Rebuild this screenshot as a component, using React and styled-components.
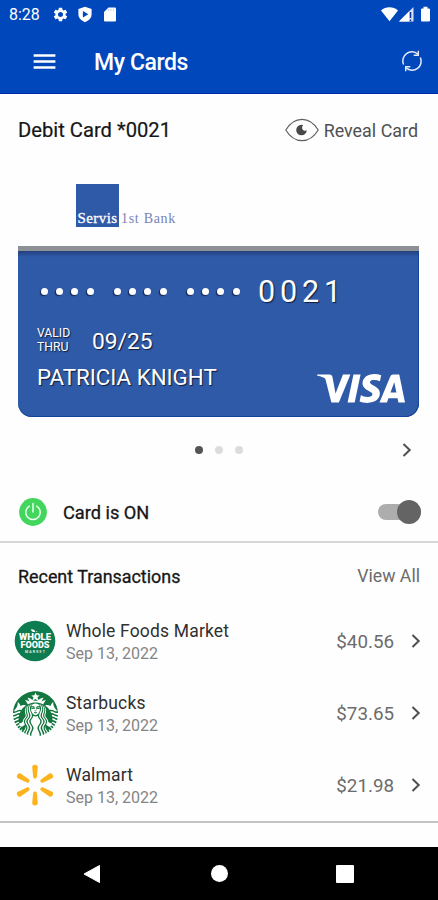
import styled, { createGlobalStyle } from 'styled-components';
import { MdSettings, MdMenu } from 'react-icons/md';
import { SiStarbucks, SiVisa } from 'react-icons/si';

const transactions = [
  { id: 1, name: 'Whole Foods Market', date: 'Sep 13, 2022', amount: '$40.56', Logo: WholeFoodsLogo },
  { id: 2, name: 'Starbucks', date: 'Sep 13, 2022', amount: '$73.65', Logo: StarbucksLogo },
  { id: 3, name: 'Walmart', date: 'Sep 13, 2022', amount: '$21.98', Logo: WalmartLogo },
];

export default function App() {
  return (
    <Screen>
      <GlobalStyle />
      <StatusBar />
      <AppBar>
        <MdMenu size={29} />
        <Title>My Cards</Title>
        <RefreshIcon />
      </AppBar>
      <CardHeader>
        <CardName>Debit Card *0021</CardName>
        <Reveal>
          <EyeIcon />
          Reveal Card
        </Reveal>
      </CardHeader>
      <DebitCard />
      <Pager>
        <span />
        <Dots>
          <Dot $active />
          <Dot />
          <Dot />
        </Dots>
        <Chevron />
      </Pager>
      <PowerRow>
        <PowerIcon />
        <PowerLabel>Card is ON</PowerLabel>
        <Switch>
          <Knob />
        </Switch>
      </PowerRow>
      <SectionHeader>
        <SectionTitle>Recent Transactions</SectionTitle>
        <ViewAll>View All</ViewAll>
      </SectionHeader>
      <List>
        {transactions.map(({ id, name, date, amount, Logo }) => (
          <Row key={id}>
            <LogoBox>
              <Logo />
            </LogoBox>
            <Info>
              <Merchant>{name}</Merchant>
              <DateText>{date}</DateText>
            </Info>
            <Amount>{amount}</Amount>
            <Chevron />
          </Row>
        ))}
      </List>
      <NavBar>
        <svg width="18" height="20" viewBox="0 0 18 20">
          <path d="M1 10 16.5 1.5v17z" fill="#fff" stroke="#fff" strokeLinejoin="round" />
        </svg>
        <HomeButton />
        <RecentsButton />
      </NavBar>
    </Screen>
  );
}

function StatusBar() {
  return (
    <Status>
      <Clock>8:28</Clock>
      <StatusIcons>
        <MdSettings size={17} />
        <svg width="16" height="17" viewBox="0 0 16 17">
          <path d="M8 .8 14.6 3v5.2c0 3.8-2.8 6.4-6.6 8-3.8-1.6-6.6-4.2-6.6-8V3z" fill="#fff" />
          <path d="M5.9 4.9v6.600l5.400-3.300z" fill="#0047bb" />
        </svg>
        <svg width="12" height="15" viewBox="0 0 12 15">
          <path d="M4.5.5H11a1 1 0 0 1 1 1v12a1 1 0 0 1-1 1H1a1 1 0 0 1-1-1V5z" fill="#fff" />
          <path d="M4.600 2v2M7 2v2M9.400 2v2" stroke="#c3d3f0" strokeWidth="1" />
        </svg>
      </StatusIcons>
      <svg width="50" height="17" viewBox="0 0 50 17">
        <path d="M0 4.500C4.600.2 12.400.2 17 4.500L8.500 15.300z" fill="#fff" />
        <path d="M18 15.500 32.500 1v14.500z" fill="#d5e0f6" />
        <path d="M18 15.500 28 5.500v10z" fill="#fff" />
        <path d="M29.500 6v6M29.500 13.500v1.500" stroke="#0a2f9e" strokeWidth="1.500" />
        <path d="M42.500.8h4v1.700H48a1 1 0 0 1 1 1v11a1 1 0 0 1-1 1h-7a1 1 0 0 1-1-1v-11a1 1 0 0 1 1-1h1.500z" fill="#fff" />
      </svg>
    </Status>
  );
}

function DebitCard() {
  return (
    <Card>
      <Bank>
        <BankSquare>Servis</BankSquare>
        <BankName>1st Bank</BankName>
      </Bank>
      <CardFace>
        <NumberRow>
          {[0, 1, 2].map((group) => (
            <Mask key={group}>
              <i />
              <i />
              <i />
              <i />
            </Mask>
          ))}
          <LastDigits>0021</LastDigits>
        </NumberRow>
        <ValidRow>
          <ValidLabel>
            VALID
            <br />
            THRU
          </ValidLabel>
          <Expiry>09/25</Expiry>
        </ValidRow>
        <HolderRow>
          <Holder>PATRICIA KNIGHT</Holder>
          <VisaLogo viewBox="0 8.1 24 7.8" preserveAspectRatio="none" />
        </HolderRow>
      </CardFace>
    </Card>
  );
}

function RefreshIcon() {
  return (
    <svg width="22" height="22" viewBox="0 0 22 22" fill="none" stroke="#e4ecfb" strokeWidth="1.500">
      <path d="M2.600 14.500A9 9 0 0 1 16.800 4.100" />
      <path d="M19.400 7.500A9 9 0 0 1 5.200 17.900" />
      <path d="M17.300.8v4.400h-4.600M4.700 21.200v-4.400h4.600" strokeWidth="1.400" />
    </svg>
  );
}

function EyeIcon() {
  return (
    <svg width="34" height="24" viewBox="0 0 34 24">
      <path
        d="M.8 12C5 5 10.500 1.300 17 1.300S29 5 33.200 12C29 19 23.500 22.700 17 22.700S5 19 .8 12z"
        fill="none"
        stroke="#606060"
        strokeWidth="1.200"
      />
      <path d="M16.500 6.700a5.300 5.300 0 1 0 5.300 5.600c-1.500.8-3.400.5-4.200-.8-.9-1.500-.5-3.500.6-4.500z" fill="#484848" />
    </svg>
  );
}

function PowerIcon() {
  return (
    <svg width="28" height="28" viewBox="0 0 28 28">
      <circle cx="14" cy="14" r="13.900" fill="#43d65c" />
      <path d="M10.300 8.200a7.200 7.200 0 1 0 7.400 0M14 5.500v8.500" fill="none" stroke="#effff1" strokeWidth="1.500" strokeLinecap="round" />
    </svg>
  );
}

function Chevron() {
  return (
    <svg width="10" height="16" viewBox="0 0 10 16">
      <path d="M1.500 2 7.700 8l-6.200 6" fill="none" stroke="#505050" strokeWidth="2" />
    </svg>
  );
}

function WholeFoodsLogo() {
  return (
    <svg width="42" height="42" viewBox="0 0 42 42">
      <circle cx="21" cy="21" r="20.300" fill="#0d7c50" />
      <g fill="#fff" fontFamily="Roboto, sans-serif" fontWeight="900" textAnchor="middle">
        <text x="21" y="19.500" fontSize="9" textLength="32" lengthAdjust="spacingAndGlyphs">WHOLE</text>
        <text x="21" y="28.300" fontSize="9" textLength="29" lengthAdjust="spacingAndGlyphs">FOODS</text>
        <text x="21" y="33.300" fontSize="3.600" fontWeight="500" textLength="20">MARKET</text>
      </g>
      <path d="M21 12c-2.500 0-3.800-.9-4-2.600 2.600-.2 4.200.8 4 2.600zM21.500 12.500c.2-1.200 1-1.700 2-1.500" fill="#fff" />
    </svg>
  );
}

function StarbucksLogo() {
  return <SiStarbucks size={45} color="#13773f" />;
}

function WalmartLogo() {
  return (
    <svg width="40" height="42" viewBox="0 0 40 42">
      {[0, 60, 120, 180, 240, 300].map((angle) => (
        <path
          key={angle}
          d="M17.200 2.800c0-2.900 5.600-2.900 5.600 0l-.9 9.900c-.2 2.400-3.600 2.400-3.800 0z"
          transform={`rotate(${angle} 20 21)`}
          fill="#fdb31e"
        />
      ))}
    </svg>
  );
}

const GlobalStyle = createGlobalStyle`
  * {
    box-sizing: border-box;
  }
  body {
    margin: 0;
    background: #fff;
    font-family: Roboto, sans-serif;
  }
`;

const Screen = styled.div`
  width: 438px;
  height: 900px;
  display: flex;
  flex-direction: column;
  background: #fefefe;
  overflow: hidden;
`;

const Status = styled.div`
  height: 29px;
  flex-shrink: 0;
  display: flex;
  align-items: center;
  padding: 0 7px 0 9px;
  background: #0047bb;
  color: #fff;
`;

const Clock = styled.div`
  width: 43px;
  font-size: 16px;
`;

const StatusIcons = styled.div`
  flex: 1;
  display: flex;
  align-items: center;
  gap: 8px;
  padding-left: 0;

  svg:last-child {
    margin-left: 3px;
  }
`;

const AppBar = styled.div`
  height: 65px;
  flex-shrink: 0;
  display: flex;
  align-items: center;
  padding: 0 15px 0 30px;
  background: #0047bb;
  border-bottom: 1px solid #0626a8;
  color: #fff;
`;

const Title = styled.div`
  flex: 1;
  margin: 2px 0 0 35px;
  font-size: 23px;
  font-weight: 500;
  letter-spacing: -0.4px;
`;

const CardHeader = styled.div`
  height: 72px;
  flex-shrink: 0;
  display: flex;
  align-items: center;
  justify-content: space-between;
  padding: 0 20px 0 18px;
`;

const CardName = styled.div`
  font-size: 20.2px;
  color: #161616;
  -webkit-text-stroke: 0.2px #161616;
`;

const Reveal = styled.div`
  display: flex;
  align-items: center;
  gap: 5px;
  font-size: 17.9px;
  color: #505050;
`;

const Card = styled.div`
  height: 251px;
  flex-shrink: 0;
  margin: 0 19px 0 17.5px;
  display: flex;
  flex-direction: column;
`;

const Bank = styled.div`
  height: 80px;
  flex-shrink: 0;
  display: flex;
  align-items: flex-start;
  padding: 18px 0 0 58.5px;
  font-family: 'Liberation Serif', serif;
  font-size: 14px;
`;

const BankSquare = styled.div`
  width: 43px;
  height: 43px;
  display: flex;
  align-items: flex-end;
  justify-content: center;
  background: #2f5aa8;
  color: #fff;
  font-size: 15px;
  letter-spacing: 0.4px;
  line-height: 17px;
  -webkit-text-stroke: 0.3px #fff;
`;

const BankName = styled.div`
  margin: 27px 0 0 2px;
  color: #7a83b8;
  letter-spacing: 0.7px;
  line-height: 16px;
`;

const CardFace = styled.div`
  flex: 1;
  border-top: 5px solid #8d9196;
  border-radius: 0 0 14px 14px;
  background: linear-gradient(#223f7d, #2f5aa8 6px);
  box-shadow: inset 0 -1px 0 #124299, inset -1px 0 0 #124299;
  padding: 22px 14px 0 19.5px;
  color: #fff;
  text-shadow: 1px 1px 1px #101c3c;
`;

const NumberRow = styled.div`
  height: 36px;
  display: flex;
  align-items: center;
`;

const Mask = styled.div`
  width: 73px;
  display: flex;
  gap: 8.2px;
  padding-left: 4px;

  i {
    width: 7px;
    height: 7px;
    border-radius: 50%;
    background: #fff;
    box-shadow: -1px 1px 1px #142650;
  }
`;

const LastDigits = styled.div`
  margin-left: 2px;
  font-size: 30.5px;
  letter-spacing: 4.9px;
`;

const ValidRow = styled.div`
  height: 44px;
  display: flex;
  align-items: center;
  margin-top: 9px;
`;

const ValidLabel = styled.div`
  width: 55px;
  font-size: 12.2px;
  line-height: 14px;
`;

const Expiry = styled.div`
  margin-top: 2px;
  font-size: 22.8px;
`;

const HolderRow = styled.div`
  display: flex;
  justify-content: space-between;
`;

const Holder = styled.div`
  margin-top: 1px;
  font-size: 22.3px;
  line-height: 28px;
`;

const VisaLogo = styled(SiVisa)`
  width: 88px;
  height: 29px;
  margin-top: 12px;
`;

const Pager = styled.div`
  height: 65px;
  flex-shrink: 0;
  display: grid;
  grid-template-columns: 1fr auto 1fr;
  align-items: center;
  padding: 0 26px;

  > svg {
    justify-self: end;
  }
`;

const Dots = styled.div`
  display: flex;
  gap: 12px;
`;

const Dot = styled.span`
  width: 8px;
  height: 8px;
  border-radius: 50%;
  background: ${(props) => (props.$active ? '#555' : '#dcdcdc')};
`;

const PowerRow = styled.div`
  height: 61px;
  flex-shrink: 0;
  display: flex;
  align-items: center;
  padding: 0 17px 0 19px;
  border-bottom: 2px solid #d6d6d6;
`;

const PowerLabel = styled.div`
  flex: 1;
  margin: 1px 0 0 16px;
  font-size: 18.2px;
  color: #161616;
  -webkit-text-stroke: 0.3px #161616;
`;

const Switch = styled.div`
  width: 43px;
  height: 16px;
  display: flex;
  align-items: center;
  justify-content: flex-end;
  border-radius: 8px;
  background: #adadad;
`;

const Knob = styled.span`
  width: 24px;
  height: 24px;
  flex-shrink: 0;
  border-radius: 50%;
  background: #646464;
`;

const SectionHeader = styled.div`
  height: 62px;
  flex-shrink: 0;
  display: flex;
  align-items: center;
  justify-content: space-between;
  padding: 4px 18px 0;
`;

const SectionTitle = styled.div`
  font-size: 17.9px;
  color: #161616;
  -webkit-text-stroke: 0.3px #161616;
`;

const ViewAll = styled.div`
  font-size: 17.7px;
  color: #6c6c6c;
`;

const List = styled.div`
  height: 218px;
  flex-shrink: 0;
  border-bottom: 2px solid #c4c4c4;
`;

const Row = styled.div`
  height: 72px;
  display: flex;
  align-items: center;
  padding: 0 17px 0 12px;
`;

const LogoBox = styled.div`
  width: 46px;
  display: flex;
  justify-content: center;
`;

const Info = styled.div`
  flex: 1;
  margin: 3px 0 0 8px;
`;

const Merchant = styled.div`
  font-size: 17.5px;
  line-height: 23px;
  letter-spacing: 0.17px;
  color: #303030;
`;

const DateText = styled.div`
  font-size: 16px;
  line-height: 22px;
  color: #858585;
`;

const Amount = styled.div`
  margin: 2px 17px 0 0;
  font-size: 18.8px;
  color: #6c6c6c;
`;

const NavBar = styled.div`
  flex: 1;
  margin-top: 24px;
  display: flex;
  align-items: center;
  justify-content: space-between;
  padding: 0 84px 0 83px;
  background: #000;
`;

const HomeButton = styled.div`
  width: 17px;
  height: 17px;
  margin-left: 1px;
  border-radius: 50%;
  background: #fff;
`;

const RecentsButton = styled.div`
  width: 18px;
  height: 18px;
  border-radius: 1px;
  background: #fff;
`;
